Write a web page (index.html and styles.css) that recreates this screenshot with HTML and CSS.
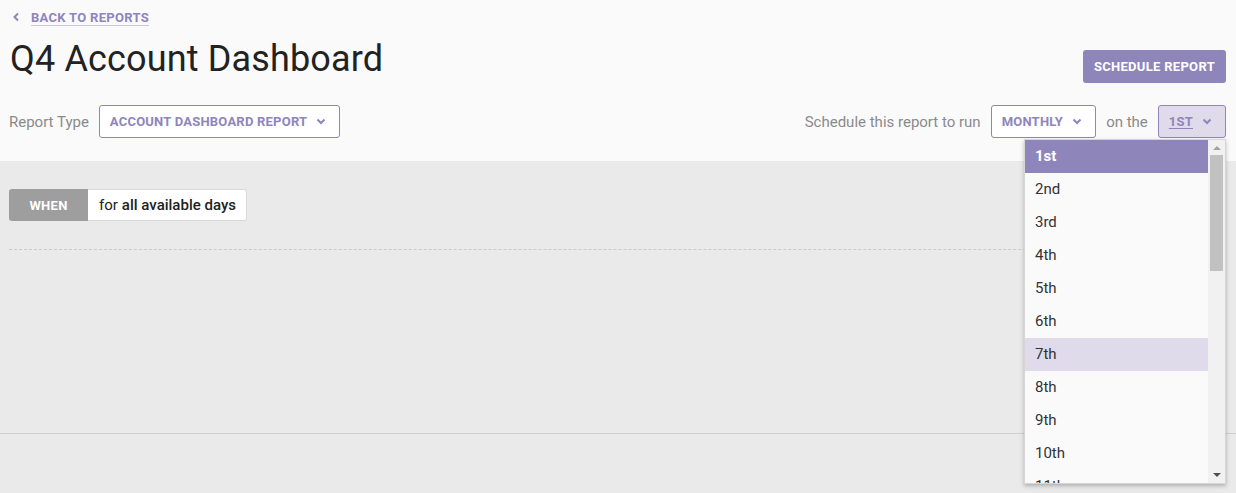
FILE: index.html
```html
<!DOCTYPE html>
<html>
<head>
<meta charset="utf-8">
<link rel="stylesheet" href="styles.css">
</head>
<body>
<header class="top">
  <a class="back" href="#">
    <svg class="back-icon" width="8" height="10" viewBox="0 0 8 10"><path d="M6 1.5L2.5 5L6 8.5" fill="none" stroke="#8e85bb" stroke-width="2"/></svg>
    <span class="back-text">BACK TO REPORTS</span>
  </a>
  <div class="title-row">
    <h1 class="title">Q4 Account Dashboard</h1>
    <button class="primary">SCHEDULE REPORT</button>
  </div>
  <div class="controls-row">
    <div class="group">
      <span class="label">Report Type</span>
      <button class="select">ACCOUNT DASHBOARD REPORT
        <svg class="chev" width="10" height="7" viewBox="0 0 10 7"><path d="M1.5 1.5L5 5L8.5 1.5" fill="none" stroke="#8e85bb" stroke-width="2"/></svg>
      </button>
    </div>
    <div class="group">
      <span class="label">Schedule this report to run</span>
      <button class="select">MONTHLY
        <svg class="chev" width="10" height="7" viewBox="0 0 10 7"><path d="M1.5 1.5L5 5L8.5 1.5" fill="none" stroke="#8e85bb" stroke-width="2"/></svg>
      </button>
      <span class="label">on the</span>
      <div class="day-wrap">
        <button class="select active"><span class="u">1ST</span>
          <svg class="chev" width="10" height="7" viewBox="0 0 10 7"><path d="M1.5 1.5L5 5L8.5 1.5" fill="none" stroke="#8e85bb" stroke-width="2"/></svg>
        </button>
        <div class="listbox">
          <ul class="options">
            <li class="opt selected">1st</li>
            <li class="opt">2nd</li>
            <li class="opt">3rd</li>
            <li class="opt">4th</li>
            <li class="opt">5th</li>
            <li class="opt">6th</li>
            <li class="opt hover">7th</li>
            <li class="opt">8th</li>
            <li class="opt">9th</li>
            <li class="opt">10th</li>
            <li class="opt">11th</li>
          </ul>
          <div class="scrollbar">
            <span class="arrow up"></span>
            <span class="thumb"></span>
            <span class="track-fill"></span>
            <span class="arrow down"></span>
          </div>
        </div>
      </div>
    </div>
  </div>
</header>
<main class="body">
  <section class="panel">
    <div class="when-pill">
      <span class="when">WHEN</span>
      <span class="when-text">for <span class="strong">all available days</span></span>
    </div>
    <div class="dashed"></div>
  </section>
  <section class="lower"></section>
</main>
</body>
</html>
```

FILE: styles.css
```css
* { box-sizing: border-box; }
html, body { margin: 0; padding: 0; }
body {
  width: 1236px;
  height: 493px;
  overflow: hidden;
  font-family: Roboto, "Liberation Sans", sans-serif;
  background: #eaeaea;
  color: #333;
}
.top {
  background: #fafafa;
  height: 161px;
  padding: 7px 10px 0 9px;
}
.back {
  display: inline-flex;
  align-items: center;
  gap: 11px;
  text-decoration: none;
  margin-left: 3px;
  height: 18px;
}
.back-icon { display: block; }
.back-text {
  font-size: 13px;
  font-weight: 700;
  color: #8e85bb;
  letter-spacing: 0.3px;
  border-bottom: 1px solid #cbc6e0;
  line-height: 15px;
  padding-top: 1px;
}
.title-row {
  display: flex;
  justify-content: space-between;
  align-items: flex-start;
  margin-top: 14px;
  height: 46px;
}
.title {
  margin: 0;
  margin-top: -1px;
  font-size: 36px;
  font-weight: 400;
  color: #222;
  line-height: 40px;
  padding-left: 1px;
  letter-spacing: 0.15px;
}
.primary {
  font-family: inherit;
  background: #8e85bb;
  color: #fff;
  border: none;
  border-radius: 3px;
  height: 33px;
  padding: 0 11px;
  font-size: 13px;
  font-weight: 700;
  letter-spacing: 0.3px;
  margin-top: 10px;
}
.controls-row {
  display: flex;
  justify-content: space-between;
  align-items: center;
  margin-top: 19px;
}
.group {
  display: flex;
  align-items: center;
  gap: 10px;
}
.label {
  font-size: 15px;
  color: #8a8a8a;
}
.select {
  font-family: inherit;
  display: inline-flex;
  align-items: center;
  gap: 9px;
  height: 33px;
  padding: 0 13px 0 10px;
  background: #fff;
  border: 1px solid #8e85bb;
  border-radius: 3px;
  color: #8e85bb;
  font-size: 13px;
  font-weight: 700;
  letter-spacing: 0.22px;
}
.chev { display: block; }
.select.active { background: #dfdbea; }
.u { text-decoration: underline; text-underline-offset: 2px; }
.day-wrap { position: relative; }
.listbox {
  position: absolute;
  top: 34px;
  right: 0;
  width: 202px;
  height: 345px;
  background: #fafafa;
  border: 1px solid #d6d6d6;
  box-shadow: 0 2px 4px rgba(0,0,0,0.25);
  display: flex;
  overflow: hidden;
  z-index: 5;
}
.options {
  list-style: none;
  margin: 0;
  padding: 0;
  flex: 1;
}
.opt {
  height: 33px;
  line-height: 33px;
  padding-left: 10px;
  font-size: 15px;
  color: #333;
}
.opt.selected { background: #8e85bb; color: #fff; font-weight: 700; }
.opt.hover { background: #dfdbea; }
.scrollbar {
  width: 17px;
  background: #f1f1f1;
  display: flex;
  flex-direction: column;
  align-items: center;
}
.arrow {
  width: 0;
  height: 0;
  border-left: 4px solid transparent;
  border-right: 4px solid transparent;
  margin: 6px 0 5px;
}
.arrow.up { border-bottom: 4px solid #a3a3a3; }
.arrow.down { border-top: 4px solid #505050; margin-bottom: 6px; }
.thumb {
  width: 13px;
  height: 116px;
  background: #c1c1c1;
}
.track-fill { flex: 1; }
.panel {
  height: 273px;
  border-bottom: 1px solid #cfcfcf;
  padding: 28px 10px 0 9px;
}
.when-pill {
  display: inline-flex;
  height: 32px;
}
.when {
  width: 79px;
  background: #9e9e9e;
  color: #fff;
  font-size: 13px;
  font-weight: 700;
  display: flex;
  align-items: center;
  justify-content: center;
  border-radius: 3px 0 0 3px;
  letter-spacing: 0.3px;
}
.when-text {
  background: #fff;
  border: 1px solid #d9d9d9;
  border-left: none;
  border-radius: 0 3px 3px 0;
  display: flex;
  align-items: center;
  padding: 0 10px 0 11px;
  font-size: 15px;
  color: #222;
  gap: 4px;
}
.strong { font-weight: 500; }
.dashed {
  margin-top: 28px;
  border-top: 1px dashed #cccccc;
}
.lower { height: 60px; }
```
